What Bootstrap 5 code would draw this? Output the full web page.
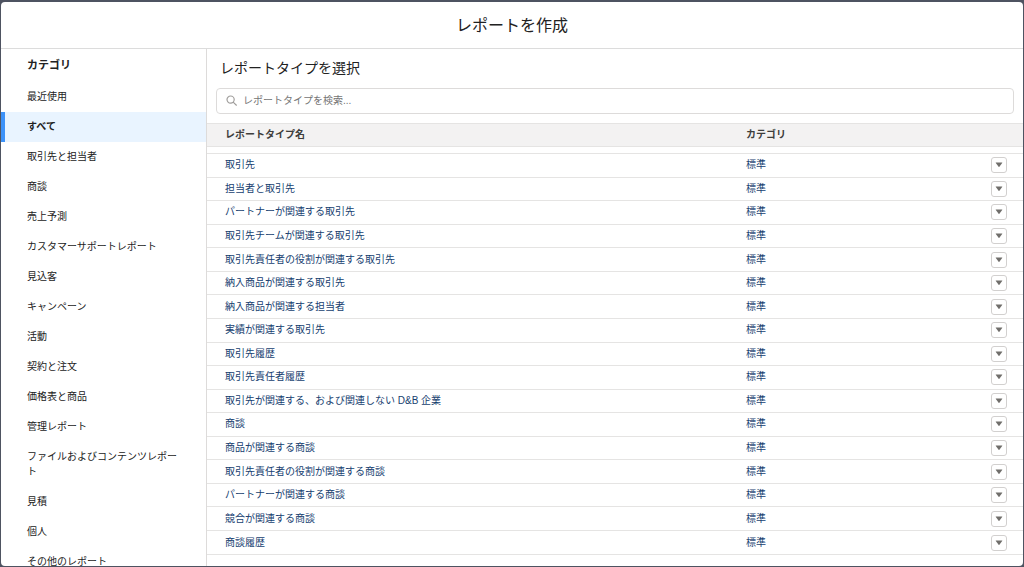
<!DOCTYPE html>
<html lang="ja">
<head>
<meta charset="utf-8">
<meta name="viewport" content="width=device-width, initial-scale=1">
<title>レポートを作成</title>
<link rel="stylesheet" href="https://cdn.jsdelivr.net/npm/bootstrap@5.3.0/dist/css/bootstrap.min.css">
<style>
  body { background: #4e5361; color: #222; font-family: "Liberation Sans", "Noto Sans CJK JP", sans-serif; font-size: 10px; line-height: 15px; padding: 2px 1px 1px; }
  .dialog { border-radius: 4px; }
  .dialog-head { height: 47px; padding-top: 2px; border-bottom: 1px solid #dcdcdc; }
  .dialog-head h1 { font-size: 16px; line-height: 20px; font-weight: 400; }
  .side { width: 206px; border-right: 1px solid #dddbda; }
  .side h2 { font-size: 11px; line-height: 15px; font-weight: 700; padding: 9px 26px 9px; }
  .side .nav-link { color: #222; padding: 7px 20px 8px 26px; line-height: 15px; }
  .side .nav-link.active { background: #e9f4ff; font-weight: 700; box-shadow: inset 4px 0 #3d92f8; }
  .pick { padding: 9px 9px 9px; }
  .pick h2 { font-size: 14px; line-height: 20px; font-weight: 400; padding-left: 4px; margin-bottom: 10px; }
  .search svg { left: 10px; top: 7px; }
  .search .form-control { height: 26px; font-size: 10px; line-height: 15px; padding: 4px 10px 5px 26px; border: 1px solid #dddbda; border-radius: 4px; }
  .search .form-control::placeholder { color: #757575; }
  .types { padding-bottom: 11px; }
  .types table { table-layout: fixed; border-collapse: separate; border-spacing: 0; }
  .types th, .types td { padding: 0 0 0 18px; vertical-align: middle; text-align: left; }
  .types thead th { height: 24px; padding-bottom: 2px; background: #f3f2f2; border-top: 1px solid #e5e4e3; border-bottom: 1px solid #e5e4e3; color: #3e3e3c; font-weight: 700; }
  .types thead td { height: 6px; padding: 0; }
  .types tbody td { border-top: 1px solid #e5e4e3; padding-bottom: 1px; }
  .types tbody tr:last-child td { border-bottom: 1px solid #e5e4e3; }
  .types tbody a, .types tbody .kind { color: #16406f; text-decoration: none; }
  .col-kind { width: 245px; }
  .col-menu { width: 50px; }
  .menu-btn { width: 16px; height: 16px; border: 1px solid #d2d0cf; border-radius: 3px; background: #fff; margin-top: 1px; }
</style>
</head>
<body class="vh-100">
<div class="dialog bg-white h-100 d-flex flex-column overflow-hidden">
  <header class="dialog-head d-flex align-items-center justify-content-center flex-shrink-0">
    <h1 class="m-0">レポートを作成</h1>
  </header>
  <div class="d-flex flex-grow-1 overflow-hidden">
    <nav class="side flex-shrink-0 overflow-hidden" aria-label="カテゴリ">
      <h2 class="m-0">カテゴリ</h2>
      <div class="nav flex-column flex-nowrap">
        <a class="nav-link" href="#">最近使用</a>
        <a class="nav-link active" href="#">すべて</a>
        <a class="nav-link" href="#">取引先と担当者</a>
        <a class="nav-link" href="#">商談</a>
        <a class="nav-link" href="#">売上予測</a>
        <a class="nav-link" href="#">カスタマーサポートレポート</a>
        <a class="nav-link" href="#">見込客</a>
        <a class="nav-link" href="#">キャンペーン</a>
        <a class="nav-link" href="#">活動</a>
        <a class="nav-link" href="#">契約と注文</a>
        <a class="nav-link" href="#">価格表と商品</a>
        <a class="nav-link" href="#">管理レポート</a>
        <a class="nav-link" href="#">ファイルおよびコンテンツレポート</a>
        <a class="nav-link" href="#">見積</a>
        <a class="nav-link" href="#">個人</a>
        <a class="nav-link" href="#">その他のレポート</a>
      </div>
    </nav>
    <main class="d-flex flex-column flex-grow-1 overflow-hidden">
      <div class="pick">
        <h2 class="mt-0">レポートタイプを選択</h2>
        <div class="search position-relative">
          <svg class="position-absolute" width="12" height="12" viewBox="0 0 12 12" fill="none" stroke="#a09e9c" stroke-width="1.2" stroke-linecap="round" aria-hidden="true"><circle cx="4.6" cy="4.6" r="3.6"/><path d="M7.4 7.4 10.4 10.2"/></svg>
          <input class="form-control" type="text" placeholder="レポートタイプを検索..." aria-label="レポートタイプを検索">
        </div>
      </div>
      <div class="types flex-grow-1 overflow-hidden">
        <table class="w-100 h-100">
          <colgroup><col><col class="col-kind"><col class="col-menu"></colgroup>
          <thead>
            <tr><th scope="col">レポートタイプ名</th><th scope="col">カテゴリ</th><th></th></tr>
            <tr><td colspan="3"></td></tr>
          </thead>
          <tbody id="rows"></tbody>
        </table>
      </div>
    </main>
  </div>
</div>
<script src="https://cdn.jsdelivr.net/npm/bootstrap@5.3.0/dist/js/bootstrap.bundle.min.js"></script>
<script>
  const types = ["取引先", "担当者と取引先", "パートナーが関連する取引先", "取引先チームが関連する取引先", "取引先責任者の役割が関連する取引先", "納入商品が関連する取引先", "納入商品が関連する担当者", "実績が関連する取引先", "取引先履歴", "取引先責任者履歴", "取引先が関連する、および関連しない D&amp;B 企業", "商談", "商品が関連する商談", "取引先責任者の役割が関連する商談", "パートナーが関連する商談", "競合が関連する商談", "商談履歴"];
  document.getElementById("rows").innerHTML = types.map(t => `<tr><td><a href="#">${t}</a></td><td><span class="kind">標準</span></td><td><button type="button" class="menu-btn d-flex align-items-center justify-content-center p-0" aria-label="${t}のメニュー"><svg width="8" height="6" viewBox="0 0 8 6" fill="#706e6b" aria-hidden="true"><path d="M1 .5h6q.6 0 .2.6L4.4 4.7q-.4.5-.8 0L.8 1.1Q.4.5 1 .5z"/></svg></button></td></tr>`).join("");
</script>
</body>
</html>
